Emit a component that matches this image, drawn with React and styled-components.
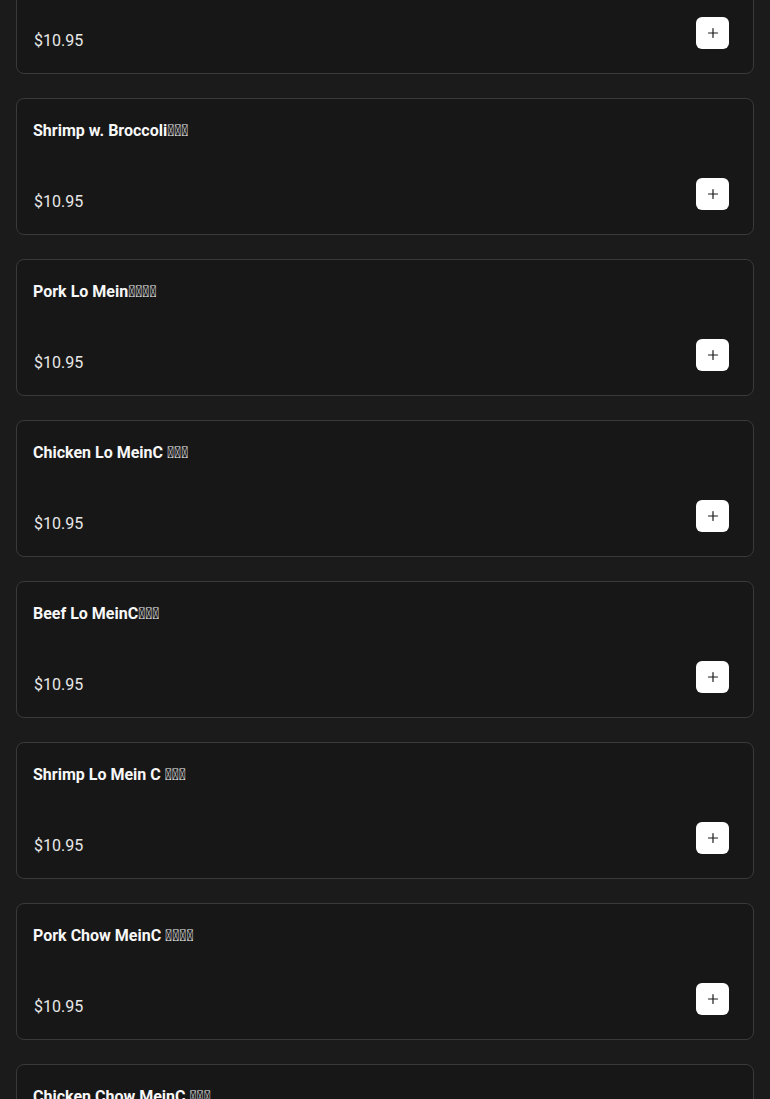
import React from 'react'
import styled, { createGlobalStyle } from 'styled-components'

const GlobalStyle = createGlobalStyle`
  html, body {
    margin: 0;
    padding: 0;
    background: #1b1b1b;
  }
  body {
    font-family: Roboto, "Liberation Sans", sans-serif;
    color: #f5f5f5;
  }
`;

const items = [
    { name: "Chicken w. Broccoli\uE000\uE001\uE002", price: 10.95 },
    { name: "Shrimp w. Broccoli\uE000\uE001\uE002", price: 10.95 },
    { name: "Pork Lo Mein\uE000\uE001\uE002\uE003", price: 10.95 },
    { name: "Chicken Lo MeinC \uE000\uE001\uE002", price: 10.95 },
    { name: "Beef Lo MeinC\uE000\uE001\uE002", price: 10.95 },
    { name: "Shrimp Lo Mein C \uE000\uE001\uE002", price: 10.95 },
    { name: "Pork Chow MeinC \uE000\uE001\uE002\uE003", price: 10.95 },
    { name: "Chicken Chow MeinC \uE000\uE001\uE002", price: 10.95 },
];

export default function App() {
    return (
        <>
            <GlobalStyle />
            <Page>
                <List>
                    {items.map((item, i) => (
                        <Card key={i}>
                            <Title>{item.name}</Title>
                            <Footer>
                                <Price>${item.price.toFixed(2)}</Price>
                                <AddButton aria-label="Add">
                                    <svg width="12" height="12" viewBox="0 0 12 12" fill="none">
                                        <path d="M6 1.5v9M1.5 6h9" stroke="#1b1b1b" strokeWidth="1.2" strokeLinecap="round" />
                                    </svg>
                                </AddButton>
                            </Footer>
                        </Card>
                    ))}
                </List>
            </Page>
        </>
    )
}

const Page = styled.div`
  padding: 0 16px;
  height: 1099px;
  overflow: hidden;
`;

const List = styled.div`
  display: flex;
  flex-direction: column;
  gap: 24px;
  margin-top: -63px;
`;

const Card = styled.div`
  box-sizing: border-box;
  height: 137px;
  display: flex;
  flex-direction: column;
  justify-content: space-between;
  padding: 16px 24px 24px 16px;
  background: #171717;
  border: 1px solid #3a3a3a;
  border-radius: 8px;
`;

const Title = styled.div`
  font-size: 16px;
  font-weight: 700;
  line-height: 30px;
  padding-top: 1px;
  color: #f7f7f7;
`;

const Footer = styled.div`
  display: flex;
  justify-content: space-between;
  align-items: flex-end;
`;

const Price = styled.div`
  font-size: 16px;
  line-height: 20px;
  color: #e8e8e8;
  margin: 0 0 -2px 1px;
`;

const AddButton = styled.button`
  width: 33px;
  height: 32px;
  padding: 0;
  border: none;
  border-radius: 6px;
  background: #ffffff;
  display: flex;
  align-items: center;
  justify-content: center;
  cursor: pointer;
`;
